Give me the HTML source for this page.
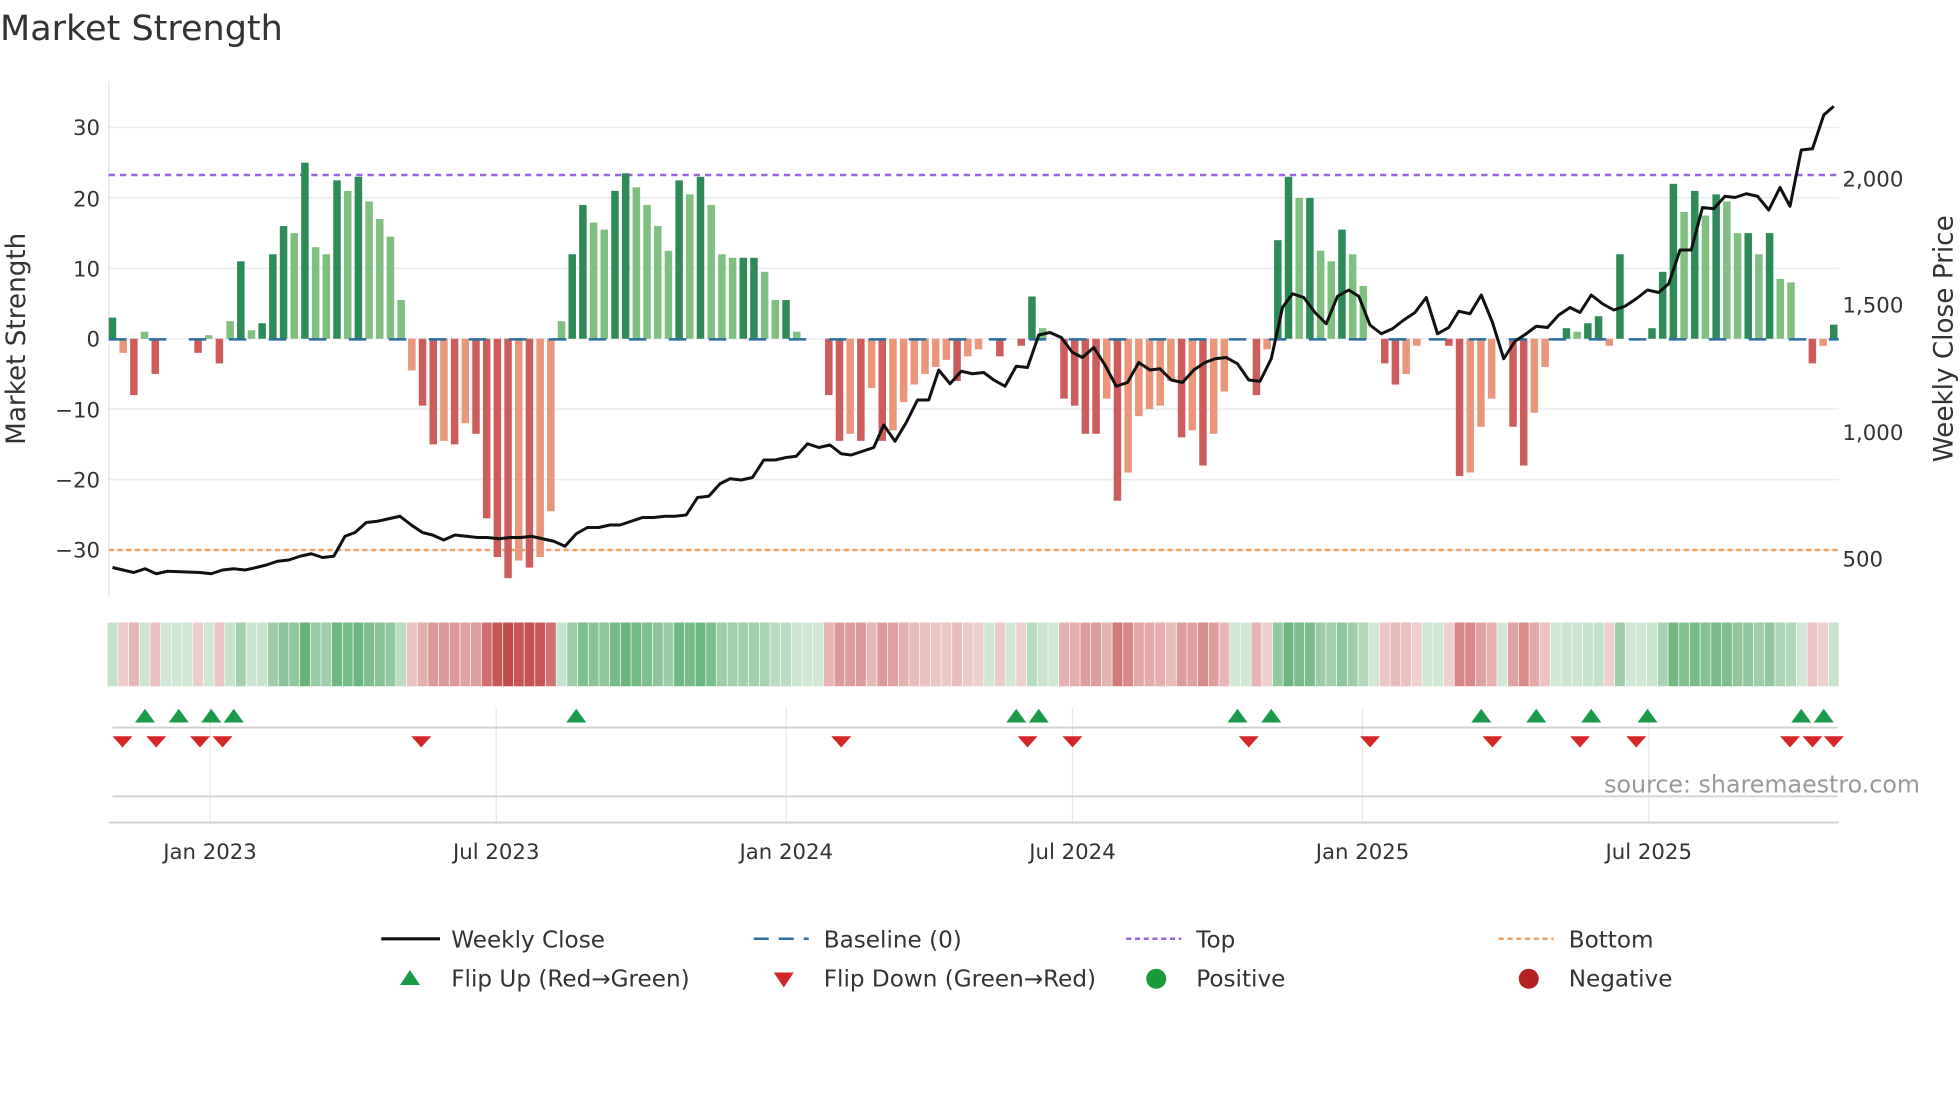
<!DOCTYPE html>
<html><head><meta charset="utf-8"><style>
html,body{margin:0;padding:0;background:#fff;width:1960px;height:1102px;overflow:hidden}
svg{display:block}
text{font-family:"DejaVu Sans","Liberation Sans",sans-serif;fill:#333}
</style></head><body>
<svg id="s" width="1960" height="1102" viewBox="0 0 1568 881.6" xmlns="http://www.w3.org/2000/svg">
<text x="0" y="32" font-size="28" fill="#333">Market Strength</text>
<g id="grid" stroke="#ececf0" stroke-width="1.2"></g>
<line x1="87" y1="65" x2="87" y2="478" stroke="#e5e5e5"/>
<g font-size="17" text-anchor="end">
<text x="80" y="108">30</text><text x="80" y="165">20</text><text x="80" y="221">10</text><text x="80" y="277">0</text>
<text x="80" y="334">−10</text><text x="80" y="390">−20</text><text x="80" y="446">−30</text>
</g>
<g font-size="17">
<text x="1474" y="149">2,000</text><text x="1474" y="250">1,500</text><text x="1474" y="352">1,000</text><text x="1474" y="453">500</text>
</g>
<text transform="translate(20,271) rotate(-90)" font-size="21" text-anchor="middle">Market Strength</text>
<text transform="translate(1562,271) rotate(-90)" font-size="21" text-anchor="middle">Weekly Close Price</text>
<line x1="87" y1="140" x2="1471" y2="140" stroke="#9a63e0" stroke-width="2" stroke-dasharray="5,4"/>
<line x1="87" y1="440" x2="1471" y2="440" stroke="#f0a060" stroke-width="2" stroke-dasharray="4,3"/>
<g id="bars"></g>
<line x1="87" y1="271.5" x2="1471" y2="271.5" stroke="#2a6fa0" stroke-width="2" stroke-dasharray="14,18"/>
<polyline id="price" fill="none" stroke="#111" stroke-width="2.4" stroke-linejoin="round"/>
<g id="heat"></g>
<g stroke="#e8e8e8" stroke-width="1">
<line x1="168" y1="566" x2="168" y2="658"/><line x1="397" y1="566" x2="397" y2="658"/><line x1="629" y1="566" x2="629" y2="658"/>
<line x1="858" y1="566" x2="858" y2="658"/><line x1="1090" y1="566" x2="1090" y2="658"/><line x1="1319" y1="566" x2="1319" y2="658"/>
</g>
<line x1="90" y1="582" x2="1470" y2="582" stroke="#cfcfcf" stroke-width="1.5"/>
<line x1="90" y1="637" x2="1470" y2="637" stroke="#d5d5d5" stroke-width="1.5"/>
<line x1="87" y1="658" x2="1471" y2="658" stroke="#cfcfcf" stroke-width="1.5"/>
<g id="flips"></g>
<text x="1536" y="634" font-size="19" text-anchor="end" style="fill:#999">source: sharemaestro.com</text>
<g font-size="17" text-anchor="middle">
<text x="168" y="687">Jan 2023</text><text x="397" y="687">Jul 2023</text><text x="629" y="687">Jan 2024</text>
<text x="858" y="687">Jul 2024</text><text x="1090" y="687">Jan 2025</text><text x="1319" y="687">Jul 2025</text>
</g>
<g font-size="18.5">
<line x1="305" y1="751" x2="352" y2="751" stroke="#111" stroke-width="2.5"/><text x="361" y="758">Weekly Close</text>
<line x1="603" y1="751" x2="647" y2="751" stroke="#2a6fa0" stroke-width="2" stroke-dasharray="12,8"/><text x="659" y="758">Baseline (0)</text>
<line x1="901" y1="751" x2="945" y2="751" stroke="#9a63e0" stroke-width="2" stroke-dasharray="4,3"/><text x="957" y="758">Top</text>
<line x1="1199" y1="751" x2="1243" y2="751" stroke="#f0a060" stroke-width="2" stroke-dasharray="4,3"/><text x="1255" y="758">Bottom</text>
<polygon points="320,788 336,788 328,776" fill="#1a9a4a"/><text x="361" y="789">Flip Up (Red→Green)</text>
<polygon points="619,778 635,778 627,790" fill="#d62728"/><text x="659" y="789">Flip Down (Green→Red)</text>
<circle cx="925" cy="783" r="8" fill="#1a9a3a"/><text x="957" y="789">Positive</text>
<circle cx="1223" cy="783" r="8" fill="#b22222"/><text x="1255" y="789">Negative</text>
</g>
</svg>
<script>
var NS="http://www.w3.org/2000/svg";
function el(p,t,a){var e=document.createElementNS(NS,t);for(var k in a)e.setAttribute(k,a[k]);p.appendChild(e);return e;}
var g=document.getElementById('grid');
[30,20,10,0,-10,-20,-30].forEach(function(v){var y=271-v*5.633;el(g,'line',{x1:87,x2:1471,y1:y,y2:y});});
var v=[3,-2,-8,1,-5,0,0,0,-2,0.5,-3.5,2.5,11,1.2,2.2,12,16,15,25,13,12,22.5,21,23,19.5,17,14.5,5.5,-4.5,-9.5,-15,-14.5,-15,-12,-13.5,-25.5,-31,-34,-31.5,-32.5,-31,-24.5,2.5,12,19,16.5,15.5,21,23.5,21.5,19,16,12.5,22.5,20.5,23,19,12,11.5,11.5,11.5,9.5,5.5,5.5,1,0,0,-8,-14.5,-13.5,-14.5,-7,-14.5,-13,-9,-6.5,-5,-4,-3,-6,-2.5,-1.5,0,-2.5,0,-1,6,1.5,0,-8.5,-9.5,-13.5,-13.5,-8.5,-23,-19,-11,-10,-9.5,-6,-14,-13,-18,-13.5,-7.5,0,0,-8,-1.5,14,23,20,20,12.5,11,15.5,12,7.5,0,-3.5,-6.5,-5,-1,0,0,-1,-19.5,-19,-12.5,-8.5,0,-12.5,-18,-10.5,-4,0,1.5,1,2.2,3.2,-1,12,0,0,1.5,9.5,22,18,21,17.5,20.5,19.5,15,15,12,15,8.5,8,0,-3.5,-1,2];
var b=document.getElementById('bars'),h=document.getElementById('heat');
var sp=(1467-90)/(v.length-1);
for(var i=0;i<v.length;i++){
 var x=90+i*sp,val=v[i],prev=i?v[i-1]:0,dark=Math.abs(val)>=Math.abs(prev);
 var c=val>=0?(dark?'#2e8b57':'#7fbf7f'):(dark?'#cd5c5c':'#e9967a');
 var y0=271,y1=271-val*5.633;
 if(Math.abs(val)>0.05)el(b,'rect',{x:x-3,y:Math.min(y0,y1),width:6,height:Math.abs(y1-y0),fill:c});
 var a=0.22+Math.min(Math.abs(val),34)/34*0.7;
 var hc=val>=0?'rgba(46,150,70,'+a+')':'rgba(190,60,60,'+a+')';
 el(h,'rect',{x:x-4,y:498,width:8,height:51,fill:hc});
}
var pts="90,454 107,458 116,455 125,459 134,457 160,458 169,459 178,456 187,455 196,456 205,454 213,452 222,449 231,448 240,445 249,443 258,446 267,445 276,429 284,426 293,418 302,417 311,415 320,413 329,420 338,426 346,428 355,432 364,428 373,429 382,430 390,430 399,431 408,430 417,430 425,429 434,431 443,433 452,437 461,427 470,422 479,422 488,420 496,420 505,417 514,414 523,414 532,413 540,413 549,412 558,398 567,397 576,387 584,383 593,384 602,382 611,368 620,368 629,366 637,365 646,355 655,358 664,356 673,363 681,364 690,361 699,358 707,340 716,353 725,338 734,320 743,320 751,296 760,307 769,297 778,299 787,298 795,304 804,309 813,293 822,294 831,268 840,266 849,270 858,282 866,286 875,278 884,292 893,309 902,306 911,290 920,296 928,295 937,304 946,306 955,296 964,290 972,287 981,286 990,291 999,304 1008,305 1017,287 1026,246 1034,235 1043,238 1052,250 1061,259 1070,237 1079,232 1087,237 1096,260 1105,267 1114,263 1123,256 1132,250 1141,238 1150,267 1159,262 1167,249 1176,251 1185,236 1194,258 1203,287 1212,273 1221,267 1229,261 1238,262 1247,252 1256,246 1264,250 1273,236 1282,243 1291,248 1300,245 1309,239 1318,232 1327,234 1335,227 1344,200 1353,200 1362,166 1371,167 1380,157 1388,158 1397,155 1406,157 1415,168 1424,150 1432,165 1441,120 1450,119 1459,92 1467,85";
document.getElementById('price').setAttribute('points',pts);
var f=document.getElementById('flips');
[116,143,169,187,461,813,831,990,1017,1185,1229,1273,1318,1441,1459].forEach(function(x){el(f,'polygon',{points:(x-8)+',578 '+(x+8)+',578 '+x+',567',fill:'#1a9a4a'});});
[98,125,160,178,337,673,822,858,999,1096,1194,1264,1309,1432,1450,1467].forEach(function(x){el(f,'polygon',{points:(x-8)+',589 '+(x+8)+',589 '+x+',598',fill:'#d62728'});});
</script>
</body></html>
